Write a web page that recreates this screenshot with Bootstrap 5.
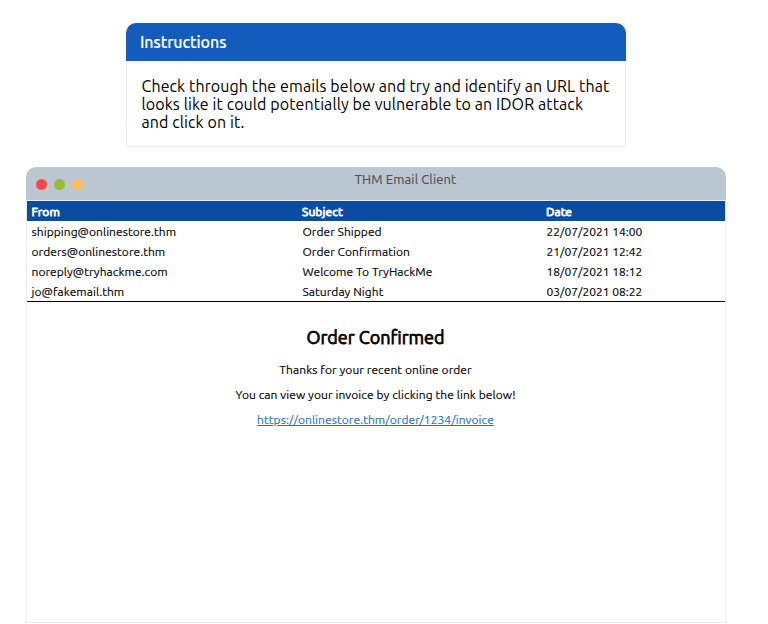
<!DOCTYPE html>
<html lang="en">
<head>
<meta charset="utf-8">
<meta name="viewport" content="width=device-width, initial-scale=1">
<title>THM Email Client</title>
<link href="https://cdn.jsdelivr.net/npm/bootstrap@5.3.0/dist/css/bootstrap.min.css" rel="stylesheet">
<style>
body{font-family:Ubuntu,"Noto Sans",sans-serif;color:#000;background:#fff;font-size:12px;line-height:20px;overflow:hidden;-webkit-text-stroke:.15px}
.page-col{width:700px;margin-left:26px;padding-top:23px}
.brief{width:500px;height:124px;margin-bottom:20px}
.brief-head{height:38px;background:#135cbb;color:#fff;font-size:16px;font-weight:500;line-height:38px;border-radius:10px 10px 0 0;padding-left:14px;letter-spacing:-.07px}
.brief-body{border:1px solid #ebebeb;border-top:0;padding:16px 14px 0 14.5px;font-size:16px;letter-spacing:.095px;line-height:18px;height:86px;white-space:nowrap;-webkit-text-stroke:0}
.client{height:456px}
.client-bar{height:33px;background:#bbc7d0;border-radius:10px 10px 0 0;padding:1px 0 0 10px}
.dots{gap:7px}
.dot{width:11px;height:11px;border-radius:50%}
.dot-red{background:#ff4747}
.dot-green{background:#99bd33}
.dot-amber{background:#ffbd55}
.client-title{font-size:13px;letter-spacing:.12px;color:#4c5052;line-height:18px;padding-top:2px;padding-left:2px}
.client-body{height:423px;border:1px solid #ebebeb}
.mail-grid{display:grid;grid-template-columns:271px 244px 1fr;padding:0 4.5px;height:20px;line-height:21px;letter-spacing:.05px}
.mail-grid span:last-child{letter-spacing:0}
.mail-head{background:#0a4da0;color:#fff;-webkit-text-stroke:.8px #fff;letter-spacing:.1px;grid-template-columns:270.5px 244px 1fr}
.mail-list{border-bottom:1px solid #000}
.msg{letter-spacing:.07px;padding-right:1px}
.msg h1{font-size:18px;line-height:24px;font-weight:400;-webkit-text-stroke:.75px #000;letter-spacing:0;margin:23px 0 0}
.msg p{margin:0;line-height:25px}
.msg a{color:#1779ba}
</style>
</head>
<body>
<main class="page-col">
  <section class="brief mx-auto">
    <div class="brief-head">Instructions</div>
    <div class="brief-body">Check through the emails below and try and identify an URL that<br>looks like it could potentially be vulnerable to an IDOR attack<br>and click on it.</div>
  </section>
  <section class="client">
    <div class="client-bar d-flex">
      <div class="dots d-flex align-items-center"><span class="dot dot-red"></span><span class="dot dot-green"></span><span class="dot dot-amber"></span></div>
      <div class="client-title flex-grow-1 text-center">THM Email Client</div>
    </div>
    <div class="client-body">
      <div class="mail-grid mail-head"><span>From</span><span>Subject</span><span>Date</span></div>
      <div class="mail-list">
        <div class="mail-grid"><span>shipping@onlinestore.thm</span><span>Order Shipped</span><span>22/07/2021 14:00</span></div>
        <div class="mail-grid"><span>orders@onlinestore.thm</span><span>Order Confirmation</span><span>21/07/2021 12:42</span></div>
        <div class="mail-grid"><span>noreply@tryhackme.com</span><span>Welcome To TryHackMe</span><span>18/07/2021 18:12</span></div>
        <div class="mail-grid"><span>jo@fakemail.thm</span><span>Saturday Night</span><span>03/07/2021 08:22</span></div>
      </div>
      <div class="msg text-center">
        <h1>Order Confirmed</h1>
        <p class="pt-2">Thanks for your recent online order</p>
        <p>You can view your invoice by clicking the link below!</p>
        <p><a href="#">https://onlinestore.thm/order/1234/invoice</a></p>
      </div>
    </div>
  </section>
</main>
<script src="https://cdn.jsdelivr.net/npm/bootstrap@5.3.0/dist/js/bootstrap.bundle.min.js"></script>
</body>
</html>
